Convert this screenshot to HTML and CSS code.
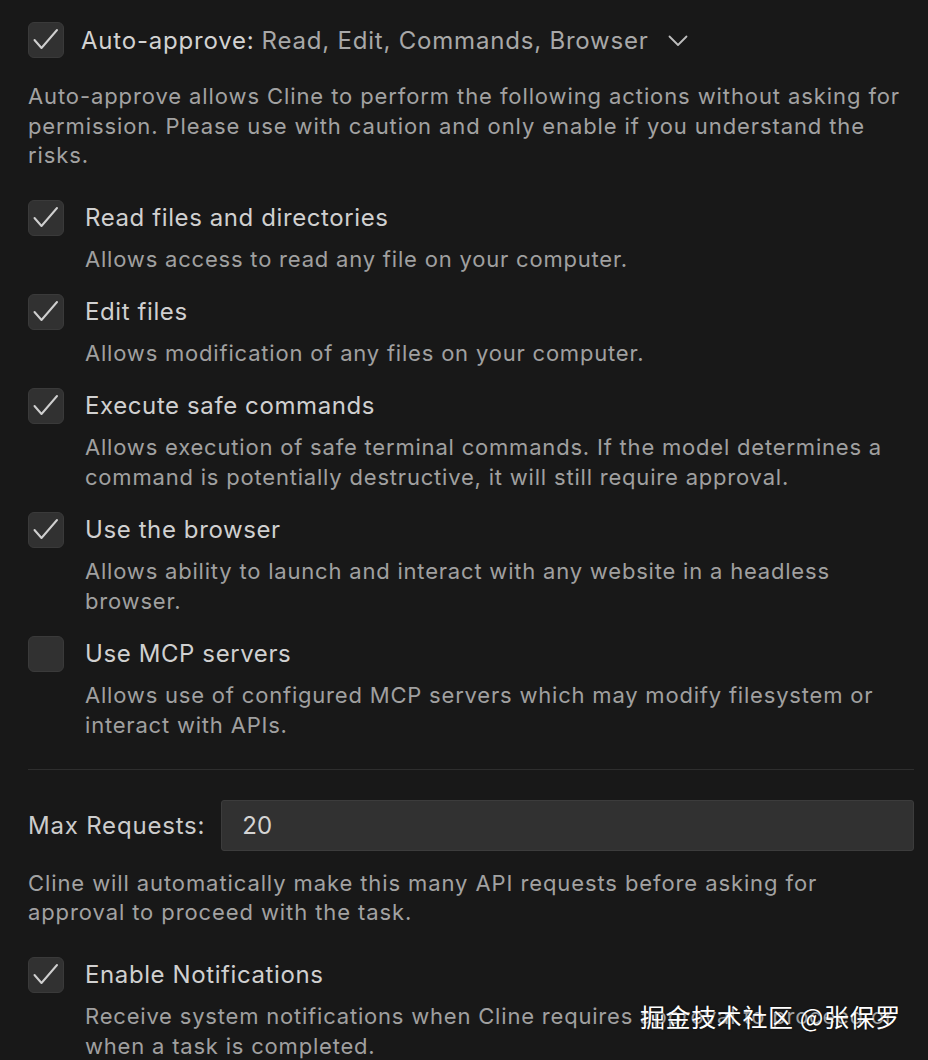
FILE: index.html
```html
<!DOCTYPE html>
<html>
<head>
<meta charset="utf-8">
<link rel="stylesheet" href="styles.css">
</head>
<body>
<div class="page">
  <div class="header">
    <span class="cb checked"><svg viewBox="0 0 36 36" width="36" height="36"><path d="M6.5 18 L13.5 26 L29 8" fill="none" stroke="#cfcfcf" stroke-width="2" stroke-linecap="round" stroke-linejoin="round"/></svg></span>
    <span class="head-title">Auto-approve:</span>
    <span class="head-list">Read, Edit, Commands, Browser</span>
    <svg class="chev" viewBox="0 0 20 12" width="20" height="12"><path d="M1.5 1.5 L10 10 L18.5 1.5" fill="none" stroke="#bdbdbd" stroke-width="1.8" stroke-linecap="round" stroke-linejoin="round"/></svg>
  </div>
  <p class="intro">Auto-approve allows Cline to perform the following actions without asking for permission. Please use with caution and only enable if you understand the risks.</p>

  <div class="options">
    <div class="option">
      <span class="cb checked"><svg viewBox="0 0 36 36" width="36" height="36"><path d="M6.5 18 L13.5 26 L29 8" fill="none" stroke="#cfcfcf" stroke-width="2" stroke-linecap="round" stroke-linejoin="round"/></svg></span>
      <div class="opt-title">Read files and directories</div>
      <div class="opt-desc">Allows access to read any file on your computer.</div>
    </div>
    <div class="option">
      <span class="cb checked"><svg viewBox="0 0 36 36" width="36" height="36"><path d="M6.5 18 L13.5 26 L29 8" fill="none" stroke="#cfcfcf" stroke-width="2" stroke-linecap="round" stroke-linejoin="round"/></svg></span>
      <div class="opt-title">Edit files</div>
      <div class="opt-desc">Allows modification of any files on your computer.</div>
    </div>
    <div class="option">
      <span class="cb checked"><svg viewBox="0 0 36 36" width="36" height="36"><path d="M6.5 18 L13.5 26 L29 8" fill="none" stroke="#cfcfcf" stroke-width="2" stroke-linecap="round" stroke-linejoin="round"/></svg></span>
      <div class="opt-title">Execute safe commands</div>
      <div class="opt-desc">Allows execution of safe terminal commands. If the model determines a command is potentially destructive, it will still require approval.</div>
    </div>
    <div class="option">
      <span class="cb checked"><svg viewBox="0 0 36 36" width="36" height="36"><path d="M6.5 18 L13.5 26 L29 8" fill="none" stroke="#cfcfcf" stroke-width="2" stroke-linecap="round" stroke-linejoin="round"/></svg></span>
      <div class="opt-title">Use the browser</div>
      <div class="opt-desc">Allows ability to launch and interact with any website in a headless browser.</div>
    </div>
    <div class="option">
      <span class="cb"></span>
      <div class="opt-title">Use MCP servers</div>
      <div class="opt-desc">Allows use of configured MCP servers which may modify filesystem or interact with APIs.</div>
    </div>
  </div>

  <div class="sep"></div>

  <div class="max-row">
    <label class="max-label">Max Requests:</label>
    <div class="input">20</div>
  </div>
  <p class="max-desc">Cline will automatically make this many API requests before asking for approval to proceed with the task.</p>

  <div class="option notif">
    <span class="cb checked"><svg viewBox="0 0 36 36" width="36" height="36"><path d="M6.5 18 L13.5 26 L29 8" fill="none" stroke="#cfcfcf" stroke-width="2" stroke-linecap="round" stroke-linejoin="round"/></svg></span>
    <div class="opt-title">Enable Notifications</div>
    <div class="opt-desc">Receive system notifications when Cline requires approval to proceed or when a task is completed.</div>
  </div>

  <div class="watermark">掘金技术社区 @张保罗</div>
</div>
</body>
</html>
```

FILE: styles.css
```css
html, body {
  margin: 0;
  padding: 0;
  background: #181818;
  height: 1060px;
  overflow: hidden;
}
.page {
  position: relative;
  padding: 22px 14px 0 28px;
  font-family: Inter, "Noto Sans", "Noto Sans CJK SC", sans-serif;
  color: #cccccc;
}
.cb {
  display: block;
  width: 36px;
  height: 36px;
  box-sizing: border-box;
  background: #313131;
  border: 1px solid #3a3a3a;
  border-radius: 6px;
  position: relative;
}
.cb svg {
  position: absolute;
  left: -1px;
  top: -1px;
}
.header {
  display: flex;
  align-items: center;
  height: 36px;
  font-size: 24px;
  letter-spacing: 0.8px;
}
.header .cb { margin-right: 17px; }
.head-title { color: #d2d2d2; margin-right: 7px; }
.head-list { color: #a8a8a8; }
.chev { margin-left: 19px; margin-top: 2px; }
.intro {
  margin: 24px 0 0 0;
  font-size: 22px;
  line-height: 29.5px;
  letter-spacing: 0.9px;
  color: #a2a2a2;
}
.options {
  margin-top: 29px;
  display: flex;
  flex-direction: column;
  gap: 20px;
}
.option {
  display: grid;
  grid-template-columns: 36px 1fr;
  column-gap: 21px;
}
.option .cb { grid-row: 1; grid-column: 1; }
.opt-title {
  grid-row: 1;
  grid-column: 2;
  font-size: 24px;
  line-height: 36px;
  letter-spacing: 0.6px;
  color: #d0d0d0;
}
.opt-desc {
  grid-row: 2;
  grid-column: 2;
  margin-top: 8px;
  font-size: 22px;
  line-height: 30px;
  letter-spacing: 0.8px;
  color: #a0a0a0;
}
.sep {
  margin-top: 29px;
  height: 1px;
  background: #2e2e2e;
}
.max-row {
  margin-top: 30px;
  display: flex;
  align-items: center;
  gap: 16px;
}
.max-label {
  font-size: 24px;
  letter-spacing: 0.8px;
  color: #cccccc;
  white-space: nowrap;
}
.input {
  flex: 1;
  height: 51px;
  box-sizing: border-box;
  background: #313131;
  border: 1px solid #3c3c3c;
  border-radius: 3px;
  padding-left: 20px;
  display: flex;
  align-items: center;
  font-size: 24px;
  color: #d4d4d4;
}
.max-desc {
  margin: 18px 0 0 0;
  font-size: 22px;
  line-height: 29.5px;
  letter-spacing: 0.9px;
  color: #a2a2a2;
}
.notif { margin-top: 29px; }
.watermark {
  position: absolute;
  left: 640px;
  top: 1000px;
  font-family: "Noto Sans CJK SC", sans-serif;
  font-size: 25px;
  line-height: 32px;
  letter-spacing: 0.6px;
  color: #ffffff;
  text-shadow: 0 0 2px rgba(0,0,0,0.6);
}
```
